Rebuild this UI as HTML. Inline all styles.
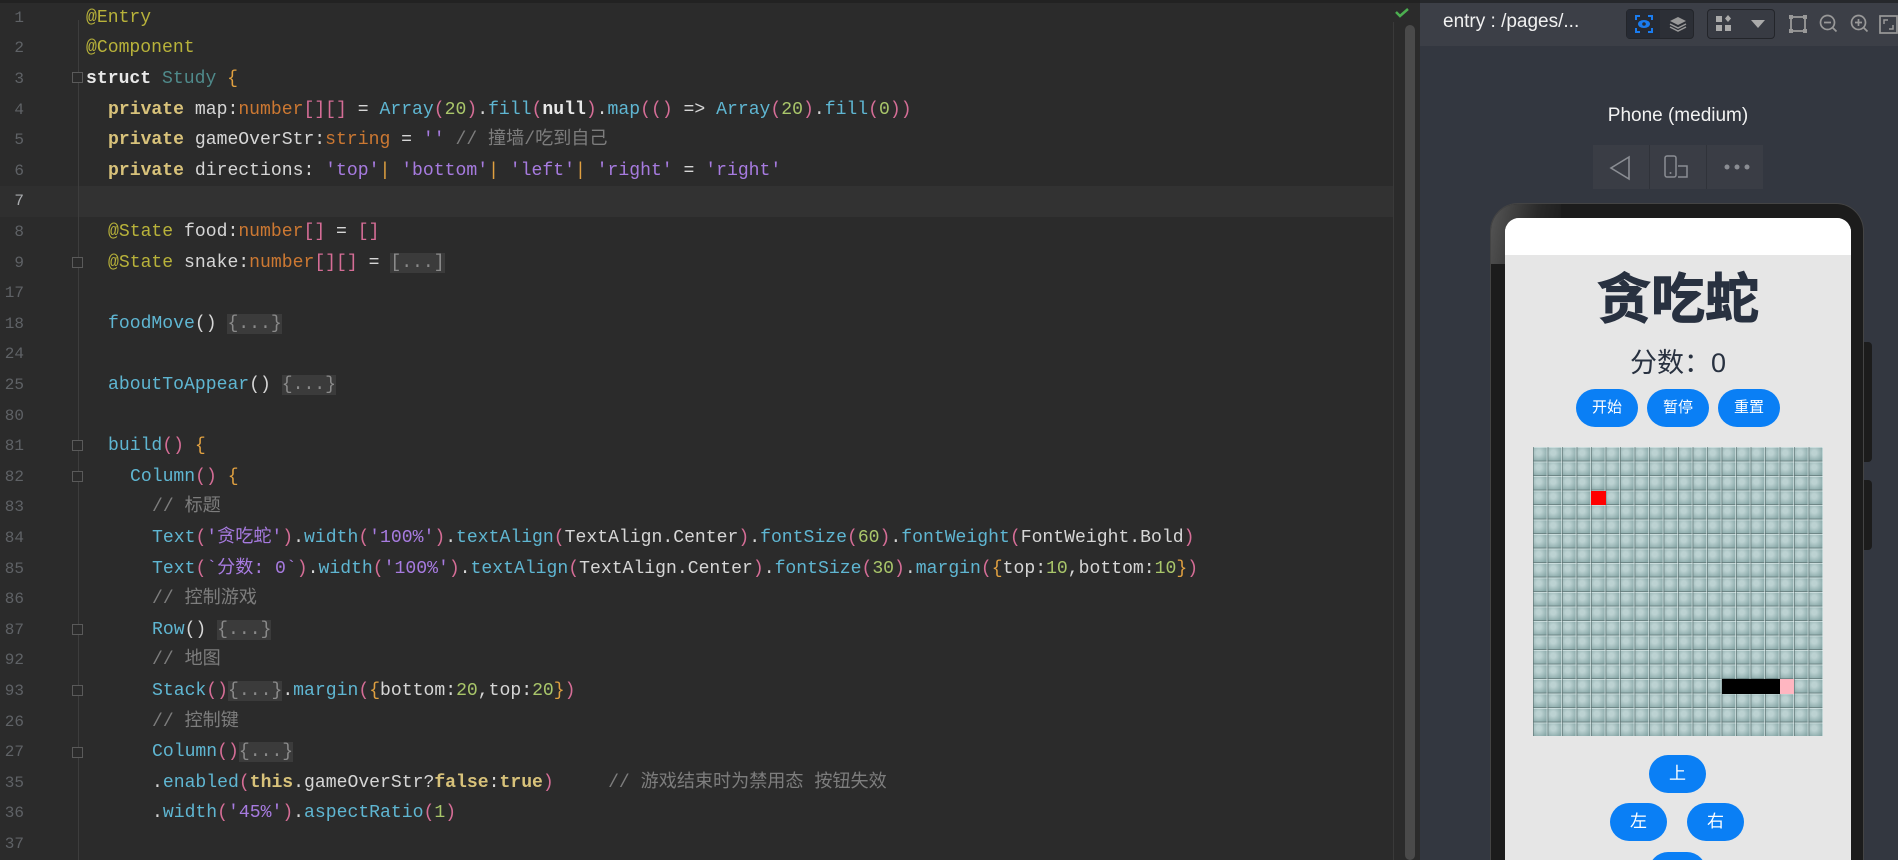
<!DOCTYPE html>
<html style="width:1898px;height:860px;overflow:hidden"><head><meta charset="utf-8"><style>
*{margin:0;padding:0;box-sizing:border-box}
body{width:1898px;height:860px;overflow:hidden;background:#2b2b2b;position:relative;font-family:"Liberation Sans","Noto Sans CJK SC",sans-serif}
.ed{position:absolute;left:0;top:0;width:1420px;height:860px;background:#2b2b2b}
.ln{position:absolute;left:0;width:24px;text-align:right;font:16px "Liberation Mono","Noto Sans CJK SC",monospace;color:#5f6266;height:30.6px;line-height:30.6px}
.cl{position:absolute;font:18.1px "Liberation Mono","Noto Sans CJK SC",monospace;color:#d6d6d6;height:30.6px;line-height:30.6px;white-space:pre}
.k{color:#d8c27a;font-weight:bold}.a{color:#b8b23a}.w{color:#e8e8e8;font-weight:bold}.ty{color:#cc7832}.p{color:#d56d96}
.s{color:#a77be0}.f{color:#5fb6d2}.n{color:#a9c66a}.b{color:#e0a040}.c{color:#7d7d7d}.t{color:#4f8a8b}
.fo{background:#3b3b3b;color:#8a8a8a}
.fold{position:absolute;left:72px;width:11px;height:11px;border:1px solid #5a5a5a;background:#2b2b2b}
.panel{position:absolute;left:1420px;top:0;width:478px;height:860px;background:#333740}
.tb{position:absolute;left:0;top:0;width:478px;height:46px;background:#3c3f47;border-top:3px solid #26282c}
.cell{position:absolute;width:14.5px;height:14.5px}
.btn{position:absolute;background:#0a7ff5;color:#fff;border-radius:19px;text-align:center;font-size:15px}
</style></head><body>
<div class="ed">
<div style="position:absolute;left:0;top:0;width:1420px;height:3px;background:#222"></div>
<div style="position:absolute;left:78px;top:186px;width:1315px;height:31px;background:#323232"></div>
<div style="position:absolute;left:0;top:186px;width:78px;height:31px;background:#2f2f2f"></div>
<div style="position:absolute;left:78px;top:20px;width:1px;height:840px;background:#3d3d3d"></div>
<div style="position:absolute;left:1393px;top:22px;width:1px;height:838px;background:#3a3a3a"></div>
<div style="position:absolute;left:1405px;top:25px;width:10px;height:835px;background:#4a4a4a;border-radius:5px"></div>
<svg style="position:absolute;left:1394px;top:6px" width="16" height="12"><path d="M2 6 L6 10 L14 3" stroke="#4caf50" stroke-width="2.5" fill="none"/></svg>

<div class="ln" style="top:2.7px">1</div>
<div class="ln" style="top:33.3px">2</div>
<div class="ln" style="top:63.9px">3</div>
<div class="ln" style="top:94.5px">4</div>
<div class="ln" style="top:125.1px">5</div>
<div class="ln" style="top:155.7px">6</div>
<div class="ln" style="top:186.3px;color:#a9abae">7</div>
<div class="ln" style="top:216.9px">8</div>
<div class="ln" style="top:247.5px">9</div>
<div class="ln" style="top:278.1px">17</div>
<div class="ln" style="top:308.7px">18</div>
<div class="ln" style="top:339.3px">24</div>
<div class="ln" style="top:369.9px">25</div>
<div class="ln" style="top:400.5px">80</div>
<div class="ln" style="top:431.1px">81</div>
<div class="ln" style="top:461.7px">82</div>
<div class="ln" style="top:492.3px">83</div>
<div class="ln" style="top:522.9px">84</div>
<div class="ln" style="top:553.5px">85</div>
<div class="ln" style="top:584.1px">86</div>
<div class="ln" style="top:614.7px">87</div>
<div class="ln" style="top:645.3px">92</div>
<div class="ln" style="top:675.9px">93</div>
<div class="ln" style="top:706.5px">26</div>
<div class="ln" style="top:737.1px">27</div>
<div class="ln" style="top:767.7px">35</div>
<div class="ln" style="top:798.3px">36</div>
<div class="ln" style="top:828.9px">37</div>

<div class="fold" style="top:72px"></div>
<div class="fold" style="top:257px"></div>
<div class="fold" style="top:440px"></div>
<div class="fold" style="top:471px"></div>
<div class="fold" style="top:624px"></div>
<div class="fold" style="top:685px"></div>
<div class="fold" style="top:747px"></div>

<div class="cl" style="left:86px;top:2.7px"><span class="a">@Entry</span></div>
<div class="cl" style="left:86px;top:33.3px"><span class="a">@Component</span></div>
<div class="cl" style="left:86px;top:63.9px"><span class="w">struct</span> <span class="t">Study</span> <span class="b">{</span></div>
<div class="cl" style="left:108px;top:94.5px"><span class="k">private</span> map:<span class="ty">number</span><span class="p">[][]</span> = <span class="f">Array</span><span class="p">(</span><span class="n">20</span><span class="p">)</span>.<span class="f">fill</span><span class="p">(</span><span class="w">null</span><span class="p">)</span>.<span class="f">map</span><span class="p">(()</span> =&gt; <span class="f">Array</span><span class="p">(</span><span class="n">20</span><span class="p">)</span>.<span class="f">fill</span><span class="p">(</span><span class="n">0</span><span class="p">))</span></div>
<div class="cl" style="left:108px;top:125.1px"><span class="k">private</span> gameOverStr:<span class="ty">string</span> = <span class="s">''</span> <span class="c">// 撞墙/吃到自己</span></div>
<div class="cl" style="left:108px;top:155.7px"><span class="k">private</span> directions: <span class="s">'top'</span><span class="b">|</span> <span class="s">'bottom'</span><span class="b">|</span> <span class="s">'left'</span><span class="b">|</span> <span class="s">'right'</span> = <span class="s">'right'</span></div>
<div class="cl" style="left:108px;top:216.9px"><span class="a">@State</span> food:<span class="ty">number</span><span class="p">[]</span> = <span class="p">[]</span></div>
<div class="cl" style="left:108px;top:247.5px"><span class="a">@State</span> snake:<span class="ty">number</span><span class="p">[][]</span> = <span class="fo">[...]</span></div>
<div class="cl" style="left:108px;top:308.7px"><span class="f">foodMove</span>() <span class="fo">{...}</span></div>
<div class="cl" style="left:108px;top:369.9px"><span class="f">aboutToAppear</span>() <span class="fo">{...}</span></div>
<div class="cl" style="left:108px;top:431.1px"><span class="f">build</span><span class="p">()</span> <span class="b">{</span></div>
<div class="cl" style="left:130px;top:461.7px"><span class="f">Column</span><span class="p">()</span> <span class="b">{</span></div>
<div class="cl" style="left:152px;top:492.3px"><span class="c">// 标题</span></div>
<div class="cl" style="left:152px;top:522.9px"><span class="f">Text</span><span class="p">(</span><span class="s">'贪吃蛇'</span><span class="p">)</span>.<span class="f">width</span><span class="p">(</span><span class="s">'100%'</span><span class="p">)</span>.<span class="f">textAlign</span><span class="p">(</span>TextAlign.Center<span class="p">)</span>.<span class="f">fontSize</span><span class="p">(</span><span class="n">60</span><span class="p">)</span>.<span class="f">fontWeight</span><span class="p">(</span>FontWeight.Bold<span class="p">)</span></div>
<div class="cl" style="left:152px;top:553.5px"><span class="f">Text</span><span class="p">(</span><span class="s">`分数: 0`</span><span class="p">)</span>.<span class="f">width</span><span class="p">(</span><span class="s">'100%'</span><span class="p">)</span>.<span class="f">textAlign</span><span class="p">(</span>TextAlign.Center<span class="p">)</span>.<span class="f">fontSize</span><span class="p">(</span><span class="n">30</span><span class="p">)</span>.<span class="f">margin</span><span class="p">(</span><span class="b">{</span>top:<span class="n">10</span>,bottom:<span class="n">10</span><span class="b">}</span><span class="p">)</span></div>
<div class="cl" style="left:152px;top:584.1px"><span class="c">// 控制游戏</span></div>
<div class="cl" style="left:152px;top:614.7px"><span class="f">Row</span>() <span class="fo">{...}</span></div>
<div class="cl" style="left:152px;top:645.3px"><span class="c">// 地图</span></div>
<div class="cl" style="left:152px;top:675.9px"><span class="f">Stack</span><span class="p">()</span><span class="fo">{...}</span>.<span class="f">margin</span><span class="p">(</span><span class="b">{</span>bottom:<span class="n">20</span>,top:<span class="n">20</span><span class="b">}</span><span class="p">)</span></div>
<div class="cl" style="left:152px;top:706.5px"><span class="c">// 控制键</span></div>
<div class="cl" style="left:152px;top:737.1px"><span class="f">Column</span><span class="p">()</span><span class="fo">{...}</span></div>
<div class="cl" style="left:152px;top:767.7px">.<span class="f">enabled</span><span class="p">(</span><span class="k">this</span>.gameOverStr?<span class="k">false</span>:<span class="k">true</span><span class="p">)</span>     <span class="c">// 游戏结束时为禁用态 按钮失效</span></div>
<div class="cl" style="left:152px;top:798.3px">.<span class="f">width</span><span class="p">(</span><span class="s">'45%'</span><span class="p">)</span>.<span class="f">aspectRatio</span><span class="p">(</span><span class="n">1</span><span class="p">)</span></div>
</div>

<div class="panel">
<div class="tb">
<div style="position:absolute;left:23px;top:8px;color:#f0f0f0;font-size:19px">entry : /pages/...</div>
<div style="position:absolute;left:206px;top:6px;width:68px;height:30px;background:#2c2f36;border:1px solid #23252a;border-radius:4px"></div>
<div style="position:absolute;left:207px;top:7px;width:33px;height:28px;background:#262a33"></div>
<svg style="position:absolute;left:214px;top:11px" width="20" height="20"><path d="M2 6V2h4M14 2h4v4M18 14v4h-4M6 18H2v-4" stroke="#1a7cf0" stroke-width="2" fill="none"/><ellipse cx="10" cy="10" rx="6" ry="4" fill="#1a7cf0"/><circle cx="10" cy="10" r="1.8" fill="#262a33"/></svg>
<svg style="position:absolute;left:248px;top:11px" width="20" height="20"><path d="M10 3l8 4-8 4-8-4z" fill="#999"/><path d="M2 10l8 4 8-4M2 13l8 4 8-4" stroke="#999" stroke-width="1.5" fill="none"/></svg>
<div style="position:absolute;left:287px;top:6px;width:68px;height:30px;border:1px solid #23252a;border-radius:4px;background:#383b43"></div>
<svg style="position:absolute;left:295px;top:12px" width="18" height="18"><rect x="1" y="1" width="6" height="6" fill="#aaa"/><rect x="1" y="10" width="6" height="6" fill="#aaa"/><rect x="10" y="10" width="6" height="6" fill="#aaa"/><path d="M13 0l3 3.5-3 3.5-3-3.5z" fill="#aaa"/></svg>
<svg style="position:absolute;left:330px;top:16px" width="16" height="10"><path d="M1 1h14L8 9z" fill="#aaa"/></svg>
<svg style="position:absolute;left:369px;top:11px" width="18" height="20"><rect x="2" y="3" width="14" height="14" stroke="#999" stroke-width="1.8" fill="none"/><rect x="0" y="1" width="4" height="4" fill="#999"/><rect x="14" y="1" width="4" height="4" fill="#999"/><rect x="0" y="15" width="4" height="4" fill="#999"/><rect x="14" y="15" width="4" height="4" fill="#999"/></svg>
<svg style="position:absolute;left:399px;top:11px" width="20" height="20"><circle cx="8.5" cy="8.5" r="7" stroke="#999" stroke-width="1.7" fill="none"/><path d="M5 8.5h7M13.5 13.5l4 4" stroke="#999" stroke-width="1.7"/></svg>
<svg style="position:absolute;left:430px;top:11px" width="20" height="20"><circle cx="8.5" cy="8.5" r="7" stroke="#999" stroke-width="1.7" fill="none"/><path d="M5 8.5h7M8.5 5v7M13.5 13.5l4 4" stroke="#999" stroke-width="1.7"/></svg>
<svg style="position:absolute;left:459px;top:11px" width="19" height="20"><rect x="1" y="2" width="17" height="17" stroke="#999" stroke-width="1.7" fill="none"/><path d="M5 10V6h4M14 11v4h-4" stroke="#999" stroke-width="1.5" fill="none"/></svg>
</div>
<div style="position:absolute;left:183px;width:150px;text-align:center;top:105px;font-size:19px;color:#f2f2f2;white-space:nowrap">Phone (medium)</div>
<div style="position:absolute;left:173px;top:145px;width:170px;height:44px;background:#3a3d45"></div>
<div style="position:absolute;left:229px;top:145px;width:1px;height:44px;background:#30333a"></div>
<div style="position:absolute;left:286px;top:145px;width:1px;height:44px;background:#30333a"></div>
<svg style="position:absolute;left:188px;top:155px" width="26" height="26"><path d="M21 2L3 13l18 11z" stroke="#8a8d93" stroke-width="1.6" fill="none"/></svg>
<svg style="position:absolute;left:243px;top:154px" width="30" height="26"><rect x="2" y="2" width="11" height="21" rx="2" stroke="#8a8d93" stroke-width="1.5" fill="none"/><circle cx="7.5" cy="19" r="1" fill="#8a8d93"/><path d="M15 12h9v11h-9" stroke="#8a8d93" stroke-width="1.5" fill="none"/></svg>
<svg style="position:absolute;left:303px;top:162px" width="30" height="10"><circle cx="4" cy="5" r="2.5" fill="#8a8d93"/><circle cx="14" cy="5" r="2.5" fill="#8a8d93"/><circle cx="24" cy="5" r="2.5" fill="#8a8d93"/></svg>
</div>

<!-- phone -->
<div style="position:absolute;left:1490px;top:203px;width:374px;height:657px;background:#1c1c1c;border-radius:28px 28px 0 0;border:1px solid #444;border-bottom:none;overflow:hidden">
<div style="position:absolute;left:0;top:0;width:70px;height:60px;background:linear-gradient(100deg,#555 0%,#2a2a2a 60%,#1c1c1c 100%)"></div>
</div>
<div style="position:absolute;left:1864px;top:342px;width:8px;height:120px;background:#1c1c1c;border-radius:0 4px 4px 0"></div>
<div style="position:absolute;left:1864px;top:480px;width:8px;height:70px;background:#1c1c1c;border-radius:0 4px 4px 0"></div>
<div style="position:absolute;left:1505px;top:218px;width:346px;height:642px;background:#e6e6e6;border-radius:14px 14px 0 0;overflow:hidden">
<div style="height:37px;background:#fff"></div>
<div style="position:absolute;left:0;width:346px;top:47px;text-align:center;font-size:54px;font-weight:bold;color:#283140;line-height:70px;-webkit-text-stroke:1px #283140">贪吃蛇</div>
<div style="position:absolute;left:0;width:346px;top:127px;text-align:center;font-size:27px;color:#283140;line-height:36px">分数：0</div>
<div class="btn" style="left:71px;top:171px;width:62px;height:38px;line-height:38px">开始</div>
<div class="btn" style="left:142px;top:171px;width:62px;height:38px;line-height:38px">暂停</div>
<div class="btn" style="left:213px;top:171px;width:62px;height:38px;line-height:38px">重置</div>
<div style="position:absolute;left:28px;top:229px;width:290px;height:289px;background-color:#9ab7b7;background-image:linear-gradient(90deg,rgba(90,110,110,.6) 1px,transparent 1px,transparent 13.5px,rgba(240,250,250,.5) 13.5px),linear-gradient(0deg,rgba(90,110,110,.6) 1px,transparent 1px,transparent 13.5px,rgba(240,250,250,.5) 13.5px),radial-gradient(circle at 40% 40%,#bcd2d2 20%,#86a6a6 80%);background-size:14.5px 14.5px"></div>
<div class="cell" style="left:86px;top:272.5px;background:#f00"></div>
<div style="position:absolute;left:216.5px;top:461px;width:58px;height:14.5px;background:#000"></div>
<div class="cell" style="left:274.5px;top:461px;background:#ffb6c1"></div>
<div class="btn" style="left:144px;top:537px;width:57px;height:38px;line-height:38px;font-size:17px">上</div>
<div class="btn" style="left:105px;top:585px;width:57px;height:38px;line-height:38px;font-size:17px">左</div>
<div class="btn" style="left:182px;top:585px;width:57px;height:38px;line-height:38px;font-size:17px">右</div>
<div class="btn" style="left:144px;top:634px;width:57px;height:38px"></div>
</div>
</body></html>
